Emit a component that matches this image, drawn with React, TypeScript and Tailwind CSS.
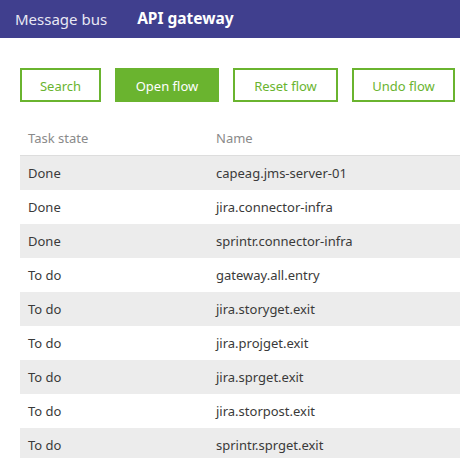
import React from "react";

const rows: [string, string][] = [
  ["Done", "capeag.jms-server-01"],
  ["Done", "jira.connector-infra"],
  ["Done", "sprintr.connector-infra"],
  ["To do", "gateway.all.entry"],
  ["To do", "jira.storyget.exit"],
  ["To do", "jira.projget.exit"],
  ["To do", "jira.sprget.exit"],
  ["To do", "jira.storpost.exit"],
  ["To do", "sprintr.sprget.exit"],
];

export default function App() {
  return (
    <div className="w-[460px] h-[458px] overflow-hidden bg-white" style={{ fontFamily: '"Noto Sans", "Open Sans", sans-serif' }}>
      <div className="h-[38px] bg-[#403f8e] flex items-center pl-[15px] text-[15px]">
        <span className="text-[#e8e8f4]">Message bus</span>
        <span className="ml-[30px] text-white font-bold text-[15.5px]">API gateway</span>
      </div>
      <div className="flex gap-[14px] pl-[20px] mt-[30px] text-[13px]">
        <button className="w-[81px] h-[34px] pt-[3px] border-2 border-[#6ab42f] text-[#6ab42f]">Search</button>
        <button className="w-[104px] h-[34px] pt-[3px] bg-[#6ab42f] text-white">Open flow</button>
        <button className="w-[105px] h-[34px] pt-[3px] border-2 border-[#6ab42f] text-[#6ab42f]">Reset flow</button>
        <button className="w-[103px] h-[34px] pt-[3px] border-2 border-[#6ab42f] text-[#6ab42f]">Undo flow</button>
      </div>
      <div className="ml-[20px] mt-[19px] text-[13px]">
        <div className="flex h-[35px] items-center pt-[2px] border-b border-[#dddddd] text-[#8a8a8a]">
          <div className="w-[196px] pl-[8px]">Task state</div>
          <div>Name</div>
        </div>
        {rows.map(([s, n], i) => (
          <div key={i} className={`flex h-[34px] items-center pt-[2px] text-[#3a3a3a] ${i % 2 === 0 ? "bg-[#ececec]" : "bg-white"}`}>
            <div className="w-[196px] pl-[8px]">{s}</div>
            <div>{n}</div>
          </div>
        ))}
      </div>
    </div>
  );
}
